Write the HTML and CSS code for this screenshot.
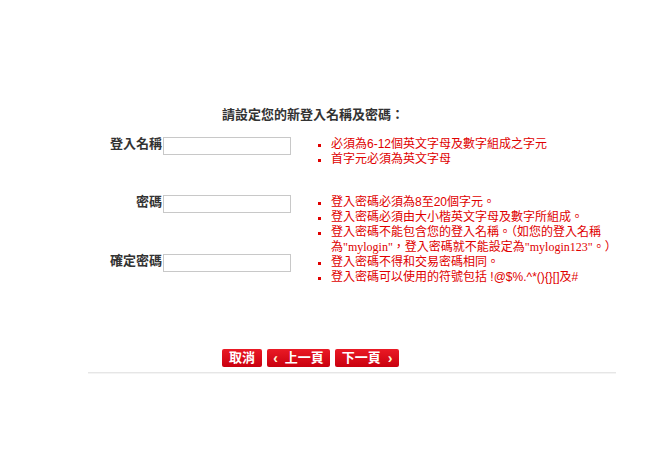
FILE: index.html
```html
<!DOCTYPE html>
<html>
  <head>
    <title>設定新登入名稱及密碼</title>
    <link rel="stylesheet" href="styles.css">
  </head>
  <body>
    <div class="page">
      <h2 class="title">請設定您的新登入名稱及密碼：</h2>

      <form class="login-form" action="#" method="POST">
        <label class="field-label row-name" for="login_name">登入名稱</label>
        <input class="field-input row-name" type="text" id="login_name" name="login_name" />
        <ul class="rules row-name">
          <li><span>必須為6-12個英文字母及數字組成之字元</span></li>
          <li><span>首字元必須為英文字母</span></li>
        </ul>

        <label class="field-label row-pass" for="password">密碼</label>
        <input class="field-input row-pass" type="password" id="password" name="password" />
        <ul class="rules rules-pass">
          <li><span>登入密碼必須為8至20個字元。</span></li>
          <li><span>登入密碼必須由大小楷英文字母及數字所組成。</span></li>
          <li><span>登入密碼不能包含您的登入名稱。（如您的登入名稱<br />為<span class="latin">"mylogin"</span>，登入密碼就不能設定為<span class="latin">"mylogin123"</span>。）</span></li>
          <li><span>登入密碼不得和交易密碼相同。</span></li>
          <li><span>登入密碼可以使用的符號包括 !@$%.^*(){}[]及#</span></li>
        </ul>

        <label class="field-label row-confirm" for="password2">確定密碼</label>
        <input class="field-input row-confirm" type="password" id="password2" name="password2" />
      </form>

      <div class="actions">
        <button type="button" class="red-button btn-cancel">取消</button>
        <button type="button" class="red-button btn-prev"><span class="arrow arrow-left">‹</span>上一頁</button>
        <button type="button" class="red-button btn-next">下一頁<span class="arrow arrow-right">›</span></button>
      </div>

      <div class="divider"></div>
    </div>
  </body>
</html>
```

FILE: styles.css
```css
body {
  margin: 0;
  padding: 0;
  background: #fff;
  font-family: "Liberation Sans", "Noto Sans CJK TC", sans-serif;
  color: #333;
}

.page {
  padding-top: 108px;
}

.title {
  margin: 0 0 0 222px;
  font-size: 13px;
  line-height: 14px;
  font-weight: bold;
  color: #333;
}

.login-form {
  display: grid;
  grid-template-columns: 163px 128px 1fr;
  grid-template-rows: 58px 59px 31px;
  margin-top: 15px;
}

.field-label {
  grid-column: 1;
  text-align: right;
  padding-right: 1px;
  font-size: 13px;
  line-height: 14px;
  font-weight: bold;
  color: #333;
}

.field-input {
  grid-column: 2;
  box-sizing: border-box;
  width: 128px;
  height: 18px;
  margin: 0;
  padding: 1px 3px;
  border: 1px solid #c8c8c8;
  border-radius: 0;
  font-size: 12px;
}

.row-name {
  grid-row: 1;
}

.row-pass {
  grid-row: 2;
}

.row-confirm {
  grid-row: 3;
}

.rules {
  grid-column: 3;
  margin: 0 0 0 27px;
  padding: 0;
  width: 305px;
  list-style: none;
  font-size: 12px;
  line-height: 15px;
  color: #e00000;
}

.rules-pass {
  grid-row: 2 / 4;
}

.rules li {
  display: flex;
}

.rules li::before {
  content: "";
  flex: none;
  width: 3px;
  height: 3px;
  margin: 7px 10px 0 0;
  background: #e00000;
}

.latin {
  font-family: "Liberation Serif", serif;
}

.actions {
  display: flex;
  gap: 5px;
  margin: 64px 0 0 222px;
}

.red-button {
  display: flex;
  align-items: center;
  justify-content: center;
  box-sizing: border-box;
  height: 18px;
  padding: 0;
  border: none;
  border-radius: 2px;
  background: linear-gradient(#ea1a25, #c9000f);
  color: #fff;
  font-family: "Liberation Sans", "Noto Sans CJK TC", sans-serif;
  font-size: 13px;
  font-weight: bold;
  line-height: 18px;
  cursor: pointer;
}

.btn-cancel {
  width: 40px;
}

.btn-prev {
  width: 63px;
}

.btn-next {
  width: 64px;
}

.arrow {
  font-size: 14px;
  color: #fff6d8;
}

.arrow-left {
  margin-right: 7px;
}

.arrow-right {
  margin-left: 7px;
}

.divider {
  width: 528px;
  margin: 5px 0 0 88px;
  border-top: 1px solid #e6e6e6;
  border-bottom: 1px solid #f4f4f4;
}
```
